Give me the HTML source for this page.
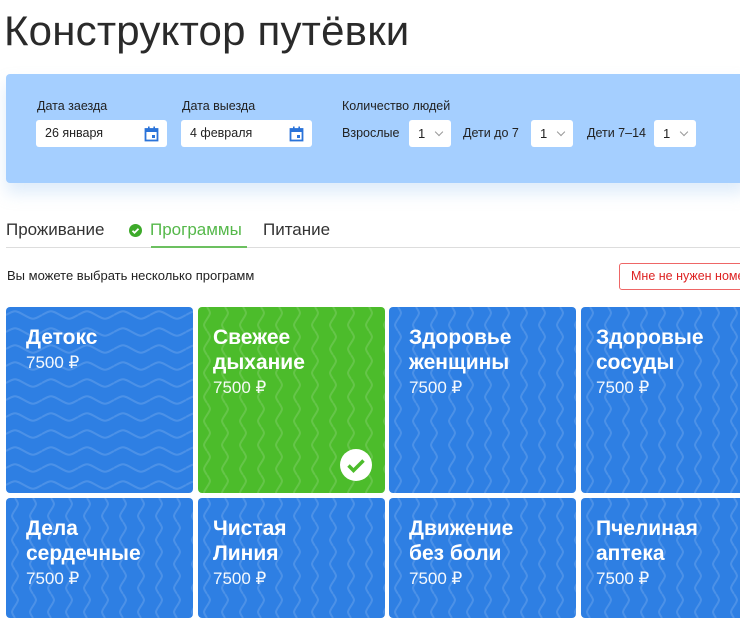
<!DOCTYPE html>
<html><head><meta charset="utf-8"><style>
*{box-sizing:border-box;margin:0;padding:0}
body{width:740px;height:600px;overflow:hidden;background:#fff;font-family:"Liberation Sans","DejaVu Sans",sans-serif;color:#222;position:relative}
.abs{position:absolute}
h1{position:absolute;left:4px;top:7px;font-weight:normal;font-size:42px;color:#2a2a2a;white-space:nowrap;letter-spacing:0.2px}
.panel{left:6px;top:74px;width:740px;height:109px;background:#a5cfff;border-radius:4px;box-shadow:0 10px 16px rgba(160,200,240,0.35)}
.lbl{font-size:12.5px;color:#222}
.inp{background:#fff;border-radius:3px;height:27px;font-size:12.5px;line-height:27px;padding-left:9px}
.sel{background:#fff;border-radius:3px;height:27px;width:42px;font-size:13px;line-height:27px;padding-left:9px}
.sel:after{content:"";position:absolute;right:9px;top:9px;width:5px;height:5px;border-right:1px solid #999;border-bottom:1px solid #999;transform:rotate(45deg)}
.card{position:absolute;border-radius:4px;overflow:hidden;color:#fff}
.card svg.bg{position:absolute;left:0;top:0}
.card .t{position:absolute;left:20px;top:18px;font-size:21px;font-weight:bold;line-height:25px}
.card .p{font-size:17px;font-weight:normal;line-height:26px;opacity:0.95}
</style></head><body>
<h1>Конструктор путёвки</h1>
<div class="abs panel"></div>
<div class="abs lbl" style="left:37px;top:99px">Дата заезда</div>
<div class="abs inp" style="left:36px;top:120px;width:131px">26 января
<svg class="abs" style="right:8px;top:6px" width="15" height="16" viewBox="0 0 15 16"><rect x="1.5" y="3" width="12" height="11.5" fill="none" stroke="#2a73d9" stroke-width="1.8"/><rect x="1.5" y="3" width="12" height="3" fill="#2a73d9"/><rect x="4" y="0.5" width="1.6" height="3" fill="#2a73d9"/><rect x="9.4" y="0.5" width="1.6" height="3" fill="#2a73d9"/><rect x="8" y="9" width="3" height="3" fill="#2a73d9"/></svg></div>
<div class="abs lbl" style="left:182px;top:99px">Дата выезда</div>
<div class="abs inp" style="left:181px;top:120px;width:131px">4 февраля
<svg class="abs" style="right:8px;top:6px" width="15" height="16" viewBox="0 0 15 16"><rect x="1.5" y="3" width="12" height="11.5" fill="none" stroke="#2a73d9" stroke-width="1.8"/><rect x="1.5" y="3" width="12" height="3" fill="#2a73d9"/><rect x="4" y="0.5" width="1.6" height="3" fill="#2a73d9"/><rect x="9.4" y="0.5" width="1.6" height="3" fill="#2a73d9"/><rect x="8" y="9" width="3" height="3" fill="#2a73d9"/></svg></div>
<div class="abs lbl" style="left:342px;top:99px">Количество людей</div>
<div class="abs lbl" style="left:342px;top:126px">Взрослые</div>
<div class="abs sel" style="left:409px;top:120px">1</div>
<div class="abs lbl" style="left:463px;top:126px">Дети до 7</div>
<div class="abs sel" style="left:531px;top:120px">1</div>
<div class="abs lbl" style="left:587px;top:126px">Дети 7–14</div>
<div class="abs sel" style="left:654px;top:120px">1</div>

<div class="abs" style="left:6px;top:220px;font-size:17px;color:#333">Проживание</div>
<svg class="abs" style="left:129px;top:224px" width="13" height="13" viewBox="0 0 13 13"><circle cx="6.5" cy="6.5" r="6.5" fill="#3daa2a"/><path d="M3.5 6.7l2 2 4-4" stroke="#fff" stroke-width="1.8" fill="none"/></svg>
<div class="abs" style="left:150px;top:220px;font-size:17px;color:#55b84a">Программы</div>
<div class="abs" style="left:263px;top:220px;font-size:17px;color:#333">Питание</div>
<div class="abs" style="left:6px;top:247px;width:734px;height:1px;background:#ddd"></div>
<div class="abs" style="left:151px;top:246px;width:96px;height:2px;background:#6cc060"></div>
<div class="abs" style="left:7px;top:268px;font-size:13px;color:#222">Вы можете выбрать несколько программ</div>
<div class="abs" style="left:619px;top:263px;width:140px;height:27px;border:1px solid #e66;border-radius:3px;color:#d22;font-size:12.5px;line-height:25px;padding-left:11px;white-space:nowrap">Мне не нужен номер</div>

<svg width="0" height="0" style="position:absolute"><defs>
<pattern id="wv" width="18" height="24" patternUnits="userSpaceOnUse"><path d="M9 0 C13 6 13 6 9 12 C5 18 5 18 9 24" stroke="rgba(255,255,255,0.14)" stroke-width="2" fill="none"/></pattern>
<pattern id="wh" width="36" height="17" patternUnits="userSpaceOnUse"><path d="M0 8 C9 3 9 3 18 8 C27 13 27 13 36 8" stroke="rgba(255,255,255,0.14)" stroke-width="2" fill="none"/></pattern>
</defs></svg>

<div class="card" style="left:6px;top:307px;width:187px;height:186px;background:#2e7fe3"><svg class="bg" width="187" height="186"><rect width="187" height="186" fill="url(#wh)"/></svg><div class="t">Детокс<div class="p">7500 ₽</div></div></div>
<div class="card" style="left:198px;top:307px;width:187px;height:186px;background:#4cbc2b"><svg class="bg" width="187" height="186"><rect width="187" height="186" fill="url(#wv)"/></svg><div class="t" style="left:15px">Свежее<br>дыхание<div class="p">7500 ₽</div></div>
<svg class="abs" style="left:142px;top:142px" width="32" height="32" viewBox="0 0 32 32"><circle cx="16" cy="16" r="16" fill="#fff"/><path d="M8.5 16.5l5 5 10-10" stroke="#4cbc2b" stroke-width="3.5" fill="none"/></svg></div>
<div class="card" style="left:389px;top:307px;width:187px;height:186px;background:#2e7fe3"><svg class="bg" width="187" height="186"><rect width="187" height="186" fill="url(#wv)"/></svg><div class="t">Здоровье<br>женщины<div class="p">7500 ₽</div></div></div>
<div class="card" style="left:581px;top:307px;width:170px;height:186px;background:#2e7fe3"><svg class="bg" width="170" height="186"><rect width="170" height="186" fill="url(#wv)"/></svg><div class="t" style="left:15px">Здоровые<br>сосуды<div class="p">7500 ₽</div></div></div>

<div class="card" style="left:6px;top:498px;width:187px;height:120px;background:#2e7fe3"><svg class="bg" width="187" height="120"><rect width="187" height="120" fill="url(#wv)"/></svg><div class="t">Дела<br>сердечные<div class="p">7500 ₽</div></div></div>
<div class="card" style="left:198px;top:498px;width:187px;height:120px;background:#2e7fe3"><svg class="bg" width="187" height="120"><rect width="187" height="120" fill="url(#wv)"/></svg><div class="t" style="left:15px">Чистая<br>Линия<div class="p">7500 ₽</div></div></div>
<div class="card" style="left:389px;top:498px;width:187px;height:120px;background:#2e7fe3"><svg class="bg" width="187" height="120"><rect width="187" height="120" fill="url(#wv)"/></svg><div class="t">Движение<br>без боли<div class="p">7500 ₽</div></div></div>
<div class="card" style="left:581px;top:498px;width:170px;height:120px;background:#2e7fe3"><svg class="bg" width="170" height="120"><rect width="170" height="120" fill="url(#wv)"/></svg><div class="t" style="left:15px">Пчелиная<br>аптека<div class="p">7500 ₽</div></div></div>
</body></html>
